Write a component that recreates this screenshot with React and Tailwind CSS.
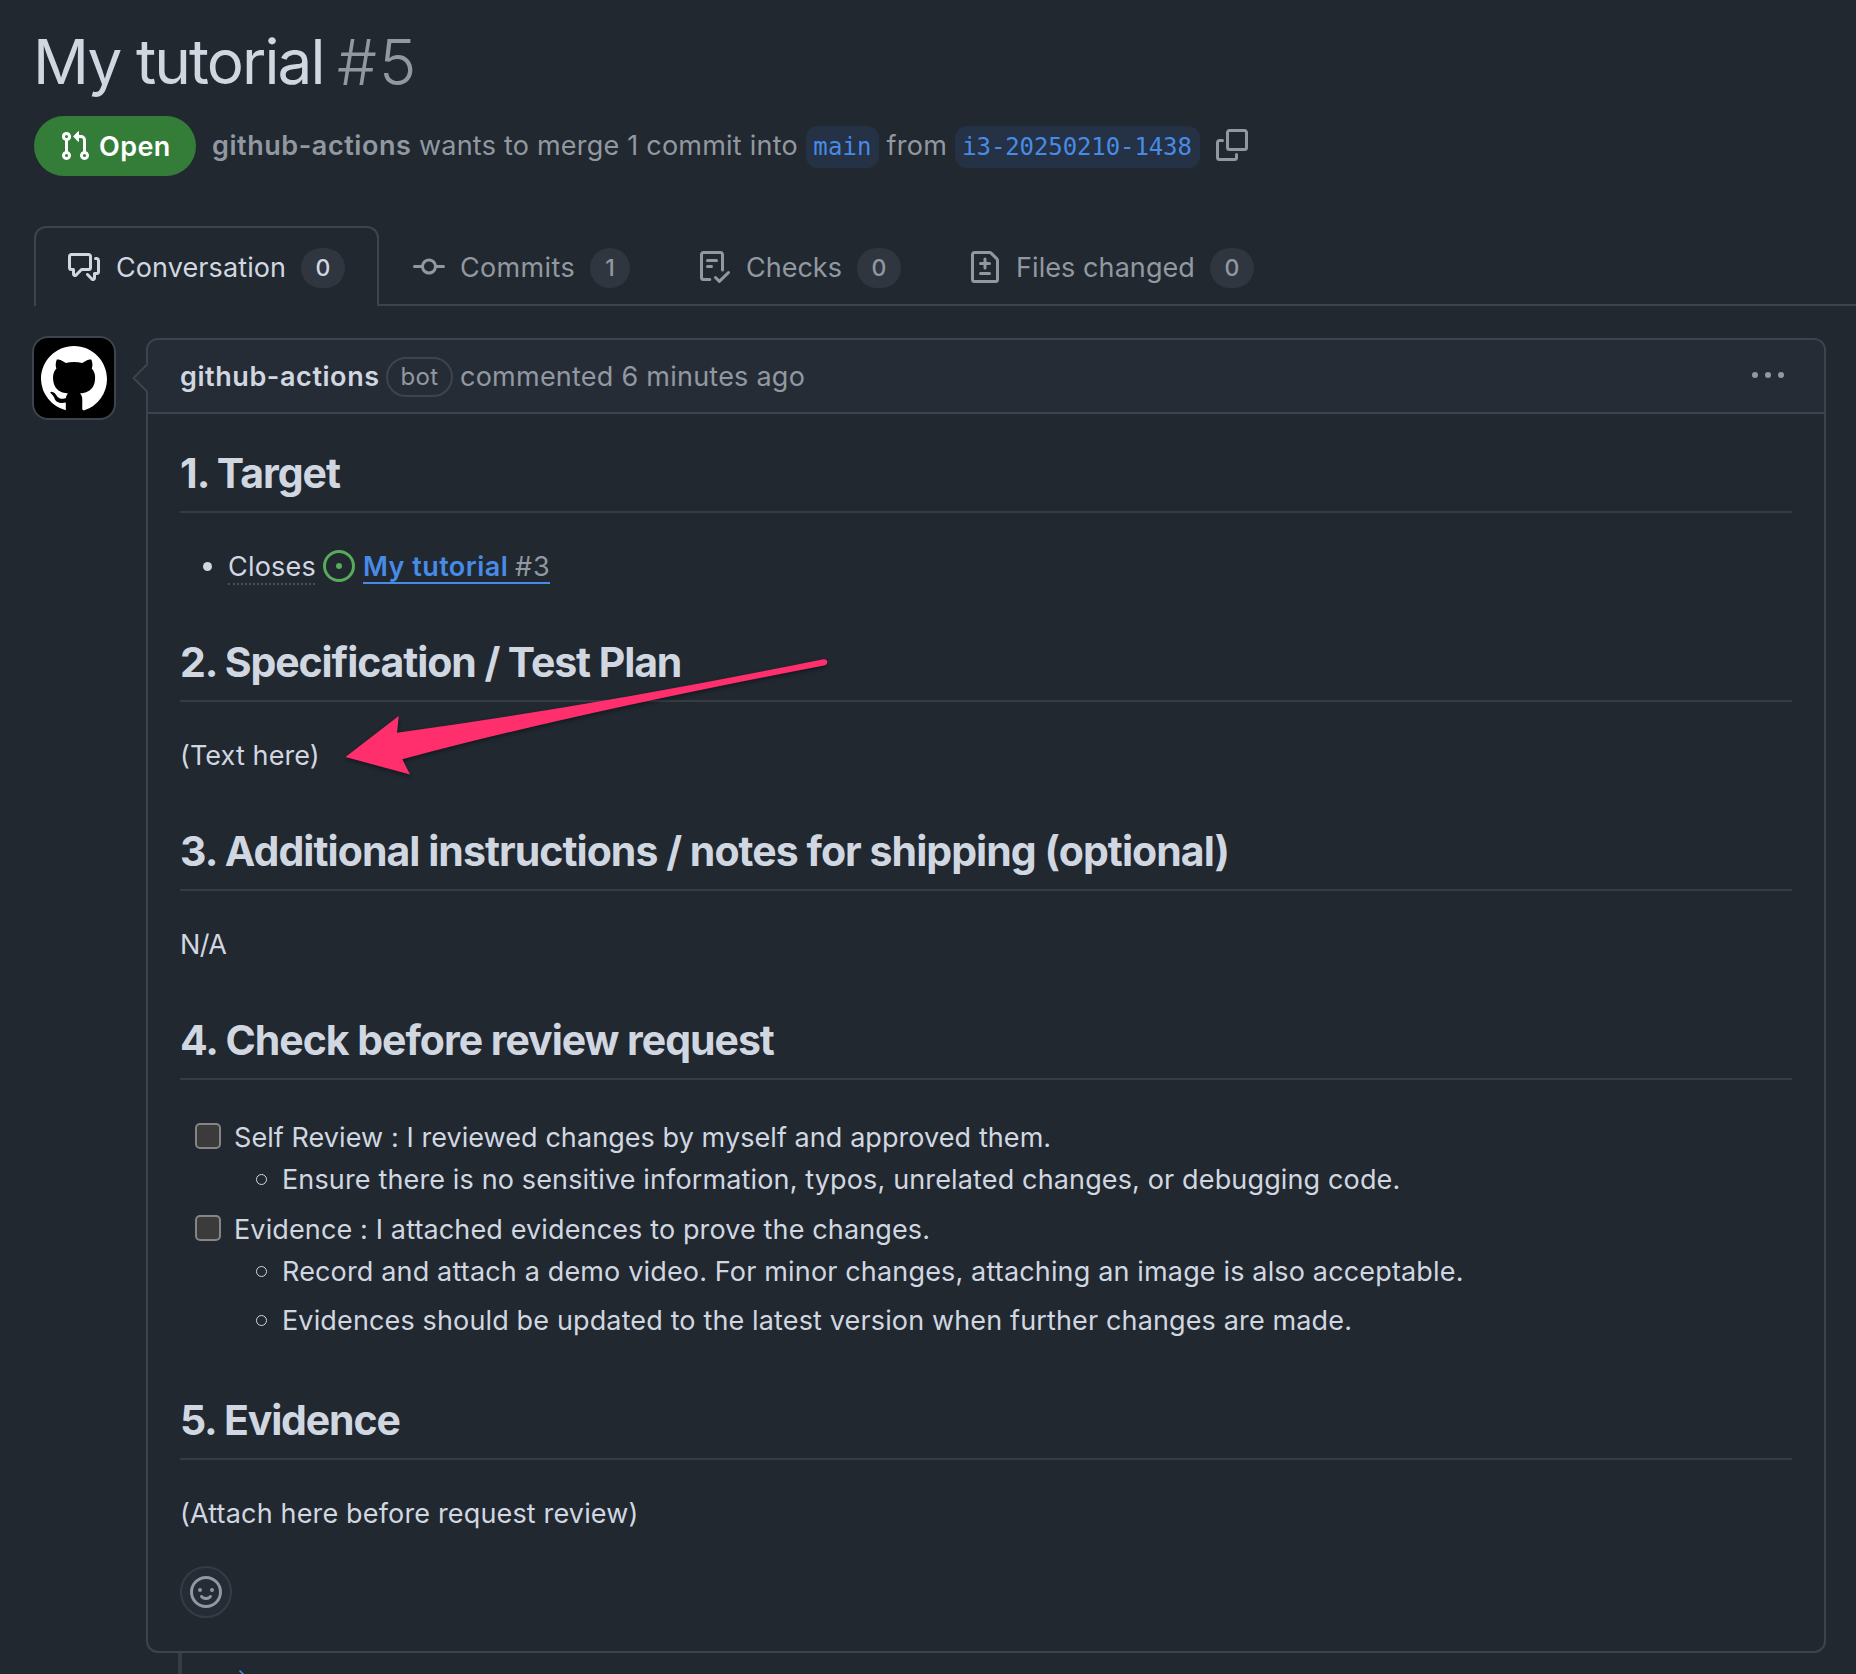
import React from 'react';

const PATHS = {
  pullRequest:
    'M1.5 3.25a2.25 2.25 0 1 1 3 2.122v5.256a2.251 2.251 0 1 1-1.5 0V5.372A2.25 2.25 0 0 1 1.5 3.25Zm5.677-.177L9.573.677A.25.25 0 0 1 10 .854V2.5h1A2.5 2.5 0 0 1 13.5 5v5.628a2.251 2.251 0 1 1-1.5 0V5a1 1 0 0 0-1-1h-1v1.646a.25.25 0 0 1-.427.177L7.177 3.427a.25.25 0 0 1 0-.354ZM3.75 2.5a.75.75 0 1 0 0 1.5.75.75 0 0 0 0-1.5Zm0 9.5a.75.75 0 1 0 0 1.5.75.75 0 0 0 0-1.5Zm8.25.75a.75.75 0 1 0 1.5 0 .75.75 0 0 0-1.5 0Z',
  discussion:
    'M1.75 1h8.5c.966 0 1.75.784 1.75 1.75v5.5A1.75 1.75 0 0 1 10.25 10H7.061l-2.574 2.573A1.458 1.458 0 0 1 2 11.543V10h-.25A1.75 1.75 0 0 1 0 8.25v-5.5C0 1.784.784 1 1.75 1ZM1.5 2.75v5.5c0 .138.112.25.25.25h1a.75.75 0 0 1 .75.75v2.19l2.72-2.72a.749.749 0 0 1 .53-.22h3.5a.25.25 0 0 0 .25-.25v-5.5a.25.25 0 0 0-.25-.25h-8.5a.25.25 0 0 0-.25.25Zm13 2a.25.25 0 0 0-.25-.25h-.5a.75.75 0 0 1 0-1.5h.5c.966 0 1.75.784 1.75 1.75v5.5A1.75 1.75 0 0 1 14.25 12H14v1.543a1.458 1.458 0 0 1-2.487 1.03L9.22 12.28a.749.749 0 0 1 .326-1.275.749.749 0 0 1 .734.215l2.22 2.22v-2.19a.75.75 0 0 1 .75-.75h1a.25.25 0 0 0 .25-.25Z',
  commit:
    'M11.93 8.5a4.002 4.002 0 0 1-7.86 0H.75a.75.75 0 0 1 0-1.5h3.32a4.002 4.002 0 0 1 7.86 0h3.32a.75.75 0 0 1 0 1.5Zm-1.43-.75a2.5 2.5 0 1 0-5 0 2.5 2.5 0 0 0 5 0Z',
  checklist:
    'M2.5 1.75v11.5c0 .138.112.25.25.25h3.17a.75.75 0 0 1 0 1.5H2.75A1.75 1.75 0 0 1 1 13.25V1.75C1 .784 1.784 0 2.75 0h8.5C12.216 0 13 .784 13 1.75v7.736a.75.75 0 0 1-1.5 0V1.75a.25.25 0 0 0-.25-.25h-8.5a.25.25 0 0 0-.25.25Zm13.274 9.537v-.001l-4.557 4.45a.75.75 0 0 1-1.055-.008l-1.943-1.95a.75.75 0 0 1 1.062-1.058l1.419 1.425 4.026-3.932a.75.75 0 1 1 1.048 1.074ZM4.75 4h4.5a.75.75 0 0 1 0 1.5h-4.5a.75.75 0 0 1 0-1.5ZM4 7.75A.75.75 0 0 1 4.75 7h2a.75.75 0 0 1 0 1.5h-2A.75.75 0 0 1 4 7.75Z',
  fileDiff:
    'M1 1.75C1 .784 1.784 0 2.75 0h7.586c.464 0 .909.184 1.237.513l2.914 2.914c.329.328.513.773.513 1.237v9.586A1.75 1.75 0 0 1 13.25 16H2.75A1.75 1.75 0 0 1 1 14.25Zm1.75-.25a.25.25 0 0 0-.25.25v12.5c0 .138.112.25.25.25h10.5a.25.25 0 0 0 .25-.25V4.664a.25.25 0 0 0-.073-.177l-2.914-2.914a.25.25 0 0 0-.177-.073ZM8 3.25a.75.75 0 0 1 .75.75v1.5h1.5a.75.75 0 0 1 0 1.5h-1.5v1.5a.75.75 0 0 1-1.5 0V7h-1.5a.75.75 0 0 1 0-1.5h1.5V4A.75.75 0 0 1 8 3.25Zm-3 8a.75.75 0 0 1 .75-.75h4.5a.75.75 0 0 1 0 1.5h-4.5a.75.75 0 0 1-.75-.75Z',
  copy:
    'M0 6.75C0 5.784.784 5 1.75 5h1.5a.75.75 0 0 1 0 1.5h-1.5a.25.25 0 0 0-.25.25v7.5c0 .138.112.25.25.25h7.5a.25.25 0 0 0 .25-.25v-1.5a.75.75 0 0 1 1.5 0v1.5A1.75 1.75 0 0 1 9.25 16h-7.5A1.75 1.75 0 0 1 0 14.25ZM5 1.75C5 .784 5.784 0 6.75 0h7.5C15.216 0 16 .784 16 1.75v7.5A1.75 1.75 0 0 1 14.25 11h-7.5A1.75 1.75 0 0 1 5 9.25Zm1.75-.25a.25.25 0 0 0-.25.25v7.5c0 .138.112.25.25.25h7.5a.25.25 0 0 0 .25-.25v-7.5a.25.25 0 0 0-.25-.25Z',
  issue:
    'M8 9.5a1.5 1.5 0 1 0 0-3 1.5 1.5 0 0 0 0 3ZM8 0a8 8 0 1 1 0 16A8 8 0 0 1 8 0ZM1.5 8a6.5 6.5 0 1 0 13 0 6.5 6.5 0 0 0-13 0Z',
  kebab:
    'M8 9a1.5 1.5 0 1 0 0-3 1.5 1.5 0 0 0 0 3ZM1.5 9a1.5 1.5 0 1 0 0-3 1.5 1.5 0 0 0 0 3Zm13 0a1.5 1.5 0 1 0 0-3 1.5 1.5 0 0 0 0 3Z',
  smiley:
    'M8 0a8 8 0 1 1 0 16A8 8 0 0 1 8 0ZM1.5 8a6.5 6.5 0 1 0 13 0 6.5 6.5 0 0 0-13 0Zm3.82 1.636a.75.75 0 0 1 1.038.175l.007.009c.103.118.22.222.35.31.264.178.683.37 1.285.37.602 0 1.02-.192 1.285-.371.13-.088.247-.192.35-.31l.007-.008a.75.75 0 0 1 1.222.87c-.16.2-.36.4-.73.66-.63.418-1.37.638-2.127.629-.946 0-1.652-.308-2.126-.63a3.331 3.331 0 0 1-.74-.69.75.75 0 0 1 .183-1.044ZM12 7a1 1 0 1 1-2 0 1 1 0 0 1 2 0ZM5 8a1 1 0 1 1 0-2 1 1 0 0 1 0 2Z',
  mark:
    'M8 0c4.42 0 8 3.58 8 8a8.013 8.013 0 0 1-5.45 7.59c-.4.08-.55-.17-.55-.38 0-.27.01-1.13.01-2.2 0-.75-.25-1.23-.54-1.48 1.78-.2 3.65-.88 3.65-3.95 0-.88-.31-1.59-.82-2.15.08-.2.36-1.02-.08-2.12 0 0-.67-.22-2.2.82-.64-.18-1.32-.27-2-.27-.68 0-1.36.09-2 .27-1.53-1.03-2.2-.82-2.2-.82-.44 1.1-.16 1.92-.08 2.12-.51.56-.82 1.28-.82 2.15 0 3.06 1.86 3.75 3.64 3.95-.23.2-.44.55-.51 1.07-.46.21-1.61.55-2.33-.66-.15-.24-.6-.83-1.23-.82-.3.01-.3.2-.05.4.4.3.75.95.88 1.26.16.45.68 1.31 2.69.94 0 .67.01 1.3.01 1.87A7.995 7.995 0 0 1 0 8c0-4.42 3.58-8 8-8Z',
};

function Icon({ name, className = 'size-8' }) {
  return (
    <svg viewBox="0 0 16 16" fill="currentColor" aria-hidden="true" className={`shrink-0 ${className}`}>
      <path d={PATHS[name]} />
    </svg>
  );
}

function Branch({ children, className }) {
  return (
    <span className={`flex h-[42px] items-center justify-center rounded-xl bg-[#253144] font-['DejaVu_Sans_Mono',monospace] text-2xl text-[#478be6] ${className}`}>
      {children}
    </span>
  );
}

function Counter({ children, className = 'w-11' }) {
  return (
    <span className={`flex h-10 items-center justify-center rounded-full bg-[#2f3640] text-[23px] font-medium ${className}`}>
      {children}
    </span>
  );
}

function Heading({ children, className = 'tracking-[-1.09px]' }) {
  return (
    <h2 className={`h-[66px] border-b-2 border-[#353c45] text-[41px] leading-[52px] font-bold whitespace-nowrap ${className}`}>
      {children}
    </h2>
  );
}

function Task({ children }) {
  return (
    <div className="flex h-[42px] items-center pl-[15px]">
      <span className="mr-[13px] mb-0.5 size-[26px] rounded-[5px] border-2 border-[#858585] bg-[#3b3b3b]" />
      <span className="pt-0.5">{children}</span>
    </div>
  );
}

function SubItem({ children }) {
  return (
    <li className="flex h-[42px] items-center pl-[76px]">
      <span className="mr-[15px] size-[11px] rounded-full border-[1.5px] border-[#d1d7e0]" />
      <span className="pt-0.5">{children}</span>
    </li>
  );
}

export default function App() {
  return (
    <div className="relative h-[1674px] w-[1856px] overflow-hidden bg-[#212830] font-[Inter,sans-serif] text-[27px] leading-[42px] tracking-[0.14px] whitespace-nowrap text-[#d1d7e0]">
      <header className="pt-[22px] pl-[34px]">
        <h1 className="flex h-20 items-center text-[62px] leading-[80px]">
          <span className="-ml-[1px] w-[304px] tracking-[-1.9px]">My tutorial</span>
          <span className="text-[63px] font-light tracking-[2px] text-[#9198a1]">#5</span>
        </h1>
        <div className="mt-[14px] flex h-[60px] items-center text-[#9198a1]">
          <span className="flex h-[60px] w-[162px] items-center rounded-full bg-[#347d39] pl-[25px] font-semibold tracking-[0.4px] text-white">
            <Icon name="pullRequest" />
            <span className="mt-px ml-2">Open</span>
          </span>
          <span className="ml-4 w-[207px] font-semibold tracking-[0.55px]">github-actions</span>
          <span className="w-[387px] tracking-[0.22px]">wants to merge 1 commit into</span>
          <Branch className="mt-0.5 w-[73px]">main</Branch>
          <span className="ml-[7.5px] w-[68px] tracking-[0.3px]">from</span>
          <Branch className="mt-0.5 w-[245px] tracking-[-0.1px]">i3-20250210-1438</Branch>
          <Icon name="copy" className="mb-0.5 ml-4 size-8" />
        </div>
      </header>

      <nav className="mt-[50px] flex h-20 text-[#9198a1]">
        <div className="w-[34px] border-b-2 border-transparent" />
        <div className="flex w-[345px] items-center rounded-t-xl border-2 border-b-0 border-[#3d444d] pl-8 text-[#d1d7e0]">
          <Icon name="discussion" />
          <span className="mt-px ml-4 w-[185px] tracking-[0.1px]">Conversation</span>
          <Counter className="mt-0.5 w-11">0</Counter>
        </div>
        <div className="flex flex-1 items-center border-b-2 border-[#3d444d] pt-0.5 pl-[34px]">
          <Icon name="commit" className="mt-0.5 size-8" />
          <span className="mt-[3px] ml-[15px] w-[130px] tracking-[0.35px]">Commits</span>
          <Counter className="mt-[3px] w-10">1</Counter>
          <Icon name="checklist" className="mt-0.5 ml-[68px] size-8" />
          <span className="mt-[3px] ml-4 w-[111px] tracking-[0px]">Checks</span>
          <Counter className="mt-[3px] w-11">0</Counter>
          <Icon name="fileDiff" className="mt-0.5 ml-[68px] size-8" />
          <span className="mt-[3px] ml-[15px] w-[194px] tracking-[0.08px]">Files changed</span>
          <Counter className="mt-[3px] w-11">0</Counter>
        </div>
      </nav>

      <main className="flex items-start pt-[30px]">
        <div className="ml-8 flex size-[84px] items-center justify-center rounded-2xl border-2 border-[#3d444d] bg-black pt-0.5 text-white">
          <Icon name="mark" className="size-[66px]" />
        </div>

        <article className="relative mt-0.5 ml-[30px] h-[1315px] w-[1680px] rounded-xl border-2 border-[#3d444d]">
          <svg viewBox="0 0 18 32" className="absolute top-[22px] -left-[17px] h-8 w-[18px]">
            <path d="M17 2 3 16 17 30" fill="#262c36" />
            <path d="M16.5 2 2.5 16l14 14" fill="none" stroke="#3d444d" strokeWidth="2" />
          </svg>
          <div className="flex h-[74px] items-center rounded-t-[10px] border-b-2 border-[#3d444d] bg-[#262c36] pr-10 pl-8 text-[#9198a1]">
            <span className="mt-px w-[206px] font-semibold tracking-[0.57px] text-[#d1d7e0]">github-actions</span>
            <span className="mt-0.5 flex h-10 w-[67px] items-center justify-center rounded-full border-2 border-[#3d444d] text-2xl tracking-[0.4px]">
              bot
            </span>
            <span className="mt-px ml-[7px] flex-1 tracking-[0.24px]">commented 6 minutes ago</span>
            <Icon name="kebab" />
          </div>

          <div className="pt-[33px] pr-8 pl-8">
            <Heading className="tracking-[-1px]">1. Target</Heading>
            <div className="mt-8 flex h-[42px] items-center pl-[23px]">
              <span className="size-[9px] rounded-full bg-[#d1d7e0]" />
              <span className="ml-4 h-[37px] w-[87px] border-b-2 border-dotted border-[#4a515b] leading-[37px] tracking-[0.2px]">
                Closes
              </span>
              <Icon name="issue" className="ml-2 size-8 text-[#57ab5a]" />
              <span className="ml-2 flex h-[36px] border-b-2 border-[#478be6] leading-[37px]">
                <span className="w-[152px] font-semibold tracking-[0.45px] text-[#478be6]">My tutorial</span>
                <span className="w-[35px] tracking-[1px] text-[#9198a1]">#3</span>
              </span>
            </div>

            <div className="mt-[49px]">
              <Heading>2. Specification / Test Plan</Heading>
              <p className="mt-[33px] tracking-[0.1px]">(Text here)</p>
            </div>

            <div className="mt-12">
              <Heading className="tracking-[-0.96px]">3. Additional instructions / notes for shipping (optional)</Heading>
              <p className="mt-[33px] tracking-[-0.6px]">N/A</p>
            </div>

            <div className="mt-12">
              <Heading className="tracking-[-1.02px]">4. Check before review request</Heading>
              <div className="mt-9">
                <Task>
                  <span className="tracking-[0.07px]">Self Review : I reviewed changes by myself and approved them.</span>
                </Task>
                <ul>
                  <SubItem>Ensure there is no sensitive information, typos, unrelated changes, or debugging code.</SubItem>
                </ul>
              </div>
              <div className="mt-2">
                <Task>
                  <span className="tracking-[0.13px]">Evidence : I attached evidences to prove the changes.</span>
                </Task>
                <ul className="flex flex-col gap-[7px]">
                  <SubItem>
                    <span className="tracking-[0.155px]">
                      Record and attach a demo video. For minor changes, attaching an image is also acceptable.
                    </span>
                  </SubItem>
                  <SubItem>Evidences should be updated to the latest version when further changes are made.</SubItem>
                </ul>
              </div>
            </div>

            <div className="mt-[53px]">
              <Heading className="tracking-[-1.15px]">5. Evidence</Heading>
              <p className="mt-[33px] tracking-[0.16px]">(Attach here before request review)</p>
            </div>

            <button className="mt-[31px] flex size-[52px] items-center justify-center rounded-full border-2 border-[#353c45] bg-[#262c36] text-[#9198a1]">
              <Icon name="smiley" />
            </button>
          </div>
        </article>
      </main>

      <footer className="flex h-[21px] pl-[178px]">
        <span className="w-1 bg-[#353c45]" />
        <svg viewBox="0 0 12 21" className="ml-[53px] h-[21px] w-3">
          <path d="M4.500 17.500 9 22" stroke="#478be6" strokeWidth="1.500" fill="none" />
        </svg>
      </footer>

      <svg viewBox="0 0 500 140" className="absolute top-[646px] left-[336px] h-[140px] w-[500px] drop-shadow-[0_2px_2px_rgba(0,0,0,0.4)]">
        <path
          d="M9.500 111 62.700 70 61 86.700Q260 59.500 487.500 13.200Q491 13 491.300 16Q491.300 18.600 488 19.400Q230 69 66.300 113.300L74 128.500Z"
          fill="#ff2f6e"
        />
      </svg>
    </div>
  );
}
